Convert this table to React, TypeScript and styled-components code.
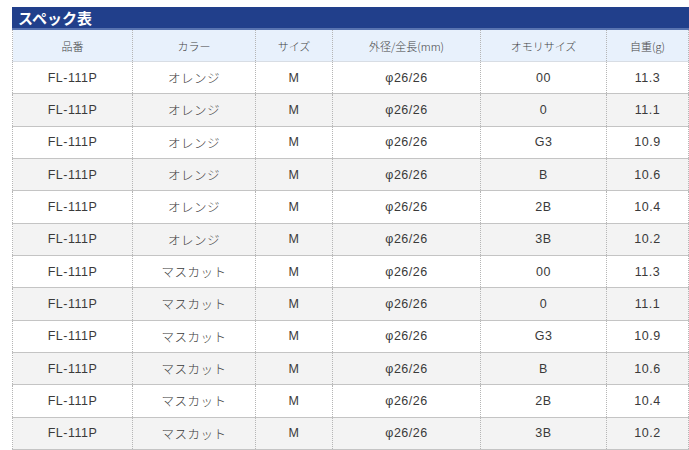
import { styled, createGlobalStyle } from "styled-components";

const GlobalStyle = createGlobalStyle`
  body {
    margin: 0;
    background: #fff;
    font-family: "Liberation Sans", "Noto Sans CJK JP", sans-serif;
    color: #333;
  }
`;

const Page = styled.div`
  padding: 7px 0 0 12px;
`;

const Title = styled.h2`
  margin: 0;
  width: 677px;
  box-sizing: border-box;
  height: 23px;
  line-height: 21px;
  padding-left: 6px;
  background: #213f8b;
  border-bottom: 2px solid #5873b0;
  color: #fff;
  font-size: 15px;
  font-weight: bold;
  font-family: "Noto Sans CJK JP", sans-serif;
`;

const Table = styled.table`
  width: 676px;
  border-collapse: collapse;
  table-layout: fixed;
  font-size: 12.5px;
  letter-spacing: 0.5px;
`;

const HeadCell = styled.th`
  height: 31px;
  padding: 0;
  background: #e8f1fc;
  font-weight: 300;
  font-size: 11px;
  letter-spacing: 0;
  font-family: "Noto Sans CJK JP", sans-serif;
  color: #444;
  border-left: 1px dotted #b5b5b5;
  border-right: 1px dotted #b5b5b5;
  border-bottom: 1px solid #d8dde4;
`;

const Row = styled.tr<{ $alt: boolean }>`
  height: 32.33px;
  background: ${(p) => (p.$alt ? "#f3f3f3" : "#fff")};
`;

const Cell = styled.td<{ $jp?: boolean }>`
  padding: 0;
  text-align: center;
  font-weight: ${(p) => (p.$jp ? 300 : 400)};
  border-left: 1px dotted #b5b5b5;
  border-right: 1px dotted #b5b5b5;
  border-bottom: 1px solid #c4c4c4;
  color: #3a3a3a;
`;

const columns = [
  { label: "品番", w: 120 },
  { label: "カラー", w: 123 },
  { label: "サイズ", w: 77 },
  { label: "外径/全長(mm)", w: 148 },
  { label: "オモリサイズ", w: 126 },
  { label: "自重(g)", w: 82 },
];

const sinkers = [
  ["00", "11.3"],
  ["0", "11.1"],
  ["G3", "10.9"],
  ["B", "10.6"],
  ["2B", "10.4"],
  ["3B", "10.2"],
];

const rows = ["オレンジ", "マスカット"].flatMap((color) =>
  sinkers.map(([s, g]) => ["FL-111P", color, "M", "φ26/26", s, g])
);

const App = () => {
  return (
    <Page>
      <GlobalStyle />
      <Title>スペック表</Title>
      <Table>
        <colgroup>
          {columns.map((c) => (
            <col key={c.label} style={{ width: c.w }} />
          ))}
        </colgroup>
        <thead>
          <tr>
            {columns.map((c) => (
              <HeadCell key={c.label}>{c.label}</HeadCell>
            ))}
          </tr>
        </thead>
        <tbody>
          {rows.map((r, i) => (
            <Row key={i} $alt={i % 2 === 1}>
              {r.map((v, j) => (
                <Cell key={j} $jp={j === 1}>
                  {v}
                </Cell>
              ))}
            </Row>
          ))}
        </tbody>
      </Table>
    </Page>
  );
};

export default App;
